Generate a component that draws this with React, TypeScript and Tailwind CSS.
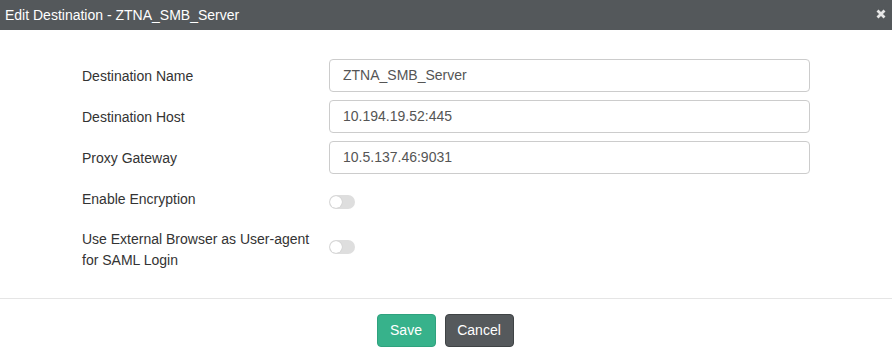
import React from "react";

function Toggle({ className = "" }: { className?: string }) {
  return (
    <div className={`relative w-[26px] h-[14px] rounded-full bg-[#dedede] ${className}`}>
      <div className="absolute left-[1px] top-[1px] w-[12px] h-[12px] rounded-full bg-white shadow-[0_0_1px_rgba(0,0,0,0.25)]" />
    </div>
  );
}

function InputRow({ label, value, className = "" }: { label: string; value: string; className?: string }) {
  return (
    <div className={`flex items-center ${className}`}>
      <div className="w-[247px] text-[14px] leading-[20px] text-[#333]">{label}</div>
      <div className="w-[481px] h-[33px] border border-[#ccc] rounded-[4px] flex items-center px-[13px] text-[14px] text-[#555]">
        {value}
      </div>
    </div>
  );
}

export default function App() {
  return (
    <div className="w-[892px] h-[358px] bg-white flex flex-col" style={{ fontFamily: '"Liberation Sans", Arial, sans-serif' }}>
      <div className="h-[30px] bg-[#54585b] flex items-center justify-between pl-[5px] pr-[6px]">
        <span className="text-white text-[14px] leading-[20px]">Edit Destination - ZTNA_SMB_Server</span>
        <svg width="10" height="10" viewBox="0 0 10 10" className="mt-[-2px]">
          <path d="M1.5 1.5 L8.5 8.5 M8.5 1.5 L1.5 8.5" stroke="#e6e6e6" strokeWidth="2.8" strokeLinecap="butt" />
        </svg>
      </div>
      <div className="pl-[82px] pt-[29px] flex flex-col">
        <InputRow label="Destination Name" value="ZTNA_SMB_Server" />
        <InputRow label="Destination Host" value="10.194.19.52:445" className="mt-[8px]" />
        <InputRow label="Proxy Gateway" value="10.5.137.46:9031" className="mt-[8px]" />
        <div className="flex items-start mt-[15px]">
          <div className="w-[247px] text-[14px] leading-[20px] text-[#333]">Enable Encryption</div>
          <Toggle className="mt-[6px]" />
        </div>
        <div className="flex items-start mt-[20px]">
          <div className="w-[247px] text-[14px] leading-[21px] text-[#333]">
            Use External Browser as User-agent
            <br />
            for SAML Login
          </div>
          <Toggle className="mt-[11px]" />
        </div>
      </div>
      <div className="mt-[27px] border-t border-[#e5e5e5]" />
      <div className="flex justify-center gap-[9px] pt-[15px] pr-[2px]">
        <button className="w-[59px] h-[33px] rounded-[4px] bg-[#37b28b] border border-[#2fa27e] text-white text-[14px]">Save</button>
        <button className="w-[69px] h-[33px] rounded-[4px] bg-[#55595c] border border-[#3f4345] text-white text-[14px]">Cancel</button>
      </div>
    </div>
  );
}
